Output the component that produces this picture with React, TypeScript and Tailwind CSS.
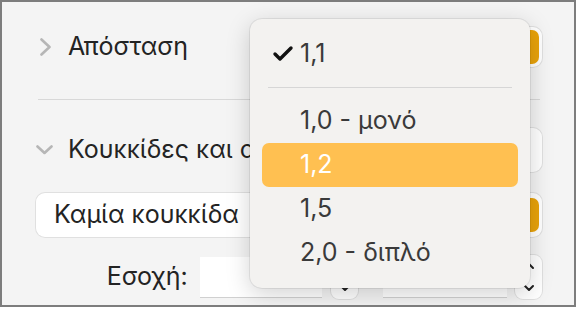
import { Check, ChevronDown, ChevronUp } from "lucide-react";

const font = { fontFamily: "Inter, 'Noto Sans', sans-serif" };

function OrangeCap() {
  return <div className="h-[34px] w-[22px] rounded-r-[7px] bg-[#e9a30a]" />;
}

function Disclosure({ open }: { open?: boolean }) {
  return (
    <span className="flex w-[32px] shrink-0 items-center">
      {open ? (
        <svg width="18" height="10" viewBox="0 0 18 10">
          <polyline points="1.5,1.5 8.5,8 15.5,1.5" fill="none" stroke="#b6b6b6" strokeWidth="2.6" strokeLinecap="round" strokeLinejoin="round" />
        </svg>
      ) : (
        <svg width="12" height="18" viewBox="0 0 12 18" className="ml-[4px]">
          <polyline points="1.5,1.5 9.5,9 1.5,16.5" fill="none" stroke="#b6b6b6" strokeWidth="2.6" strokeLinecap="round" strokeLinejoin="round" />
        </svg>
      )}
    </span>
  );
}

function Stepper({ up }: { up?: boolean }) {
  return (
    <div className="flex h-[44px] w-[27px] flex-col items-center justify-between rounded-[8px] bg-white py-[3px] shadow-[0_0_0_1px_rgba(0,0,0,0.08)]">
      <ChevronUp className={up ? "h-4 w-4 text-[#222]" : "h-4 w-4 text-transparent"} strokeWidth={3} />
      <ChevronDown className="h-4 w-4 text-[#222]" strokeWidth={3} />
    </div>
  );
}

function MenuItem({ label, checked, active }: { label: string; checked?: boolean; active?: boolean }) {
  return (
    <div
      className={
        "flex h-[44px] items-center rounded-[7px] " +
        (active ? "bg-[#ffc051] text-white" : "text-[#3a3a3a]")
      }
    >
      <span className="flex w-[38px] justify-end pr-[5px]">
        {checked && <Check className="h-[24px] w-[24px] text-[#111]" strokeWidth={3.4} />}
      </span>
      <span>{label}</span>
    </div>
  );
}

export default function App() {
  return (
    <div className="relative h-[307px] w-[576px] overflow-hidden border-2 border-[#7d7d7d] bg-[#f4f4f4] text-[25px] text-[#232323]" style={font}>
      <div className="flex flex-col pl-[34px] pr-[32px] pt-[25px]">
        <div className="flex h-[40px] items-center">
          <Disclosure />
          <span>Απόσταση</span>
          <div className="ml-auto flex h-[40px] w-[120px] items-center justify-end rounded-[9px] bg-white pr-[3px] shadow-[0_0_0_1px_rgba(0,0,0,0.08)]">
            <OrangeCap />
          </div>
        </div>

        <div className="mx-[2px] mt-[32px] h-px bg-[#d8d8d8]" />

        <div className="mt-[28px] flex h-[44px] items-center">
          <Disclosure open />
          <span className="whitespace-nowrap">Κουκκίδες και αρίθμηση</span>
          <div className="ml-auto h-[44px] w-[120px] shrink-0 rounded-[9px] bg-white shadow-[0_0_0_1px_rgba(0,0,0,0.08)]" />
        </div>

        <div className="mt-[21px] flex h-[44px] items-center rounded-[9px] bg-white pl-[18px] pr-[3px] shadow-[0_0_0_1px_rgba(0,0,0,0.08)]">
          <span>Καμία κουκκίδα</span>
          <div className="ml-auto">
            <OrangeCap />
          </div>
        </div>

        <div className="mt-[18px] flex h-[44px] items-center">
          <span className="w-[152px] text-right">Εσοχή:</span>
          <div className="ml-[12px] h-[40px] w-[123px] bg-white shadow-[0_1px_0_#d0d0d0]" />
          <div className="ml-[9px]">
            <Stepper />
          </div>
          <div className="ml-[25px] h-[40px] w-[124px] bg-white shadow-[0_1px_0_#d0d0d0]" />
          <div className="ml-[8px]">
            <Stepper up />
          </div>
        </div>
      </div>

      <div className="absolute left-[248px] top-[17px] h-[269px] w-[280px] rounded-[12px] bg-[#f3f2f0] px-[12px] pb-[10px] pt-[13px] shadow-[0_0_0_1px_rgba(0,0,0,0.07),0_6px_24px_rgba(0,0,0,0.18)]">
        <MenuItem label="1,1" checked />
        <div className="mx-[6px] my-[11px] h-px bg-[#d6d6d6]" />
        <MenuItem label="1,0 - μονό" />
        <MenuItem label="1,2" active />
        <MenuItem label="1,5" />
        <MenuItem label="2,0 - διπλό" />
      </div>
    </div>
  );
}
